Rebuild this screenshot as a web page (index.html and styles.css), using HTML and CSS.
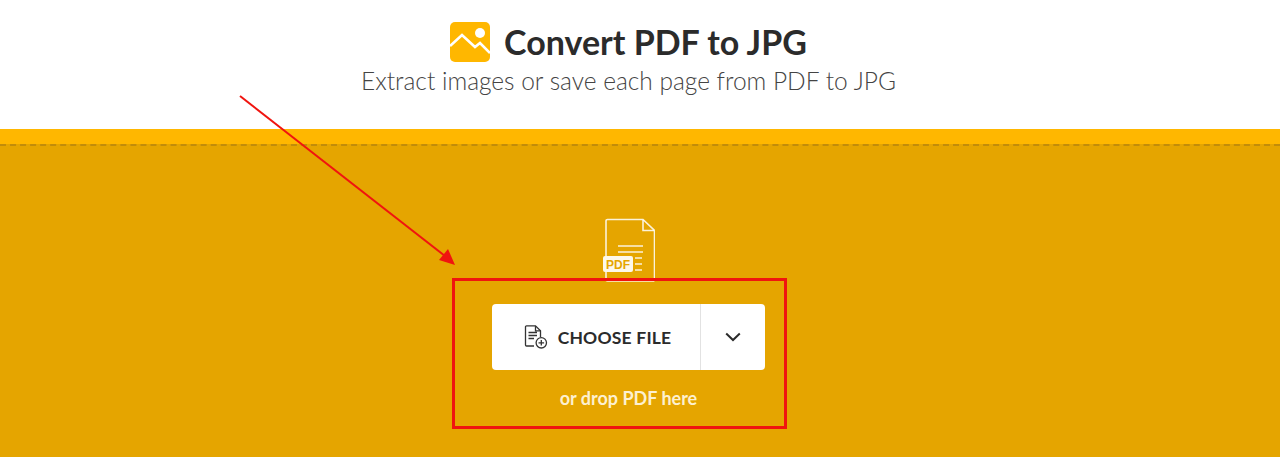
FILE: index.html
```html
<!DOCTYPE html>
<html lang="en">
<head>
  <meta charset="UTF-8">
  <title>Convert PDF to JPG</title>
  <link rel="stylesheet" href="styles.css">
</head>
<body>
  <header class="header">
    <div class="title-row">
      <svg class="title-icon" viewBox="0 0 40 40">
        <rect width="40" height="40" rx="5" fill="#FFB700"/>
        <circle cx="30" cy="11" r="5" fill="#fff"/>
        <path d="M0 24 L12 13 L25 25 L30 21 L40 31" fill="none" stroke="#fff" stroke-width="2.6"/>
      </svg>
      <h1>Convert PDF to JPG</h1>
    </div>
    <p class="subtitle">Extract images or save each page from PDF to JPG</p>
  </header>

  <main class="dropzone">
    <div class="dropzone-line"></div>
    <svg class="pdf-icon" viewBox="0 0 52 66">
      <path d="M3 38 V3 a1.500 1.500 0 0 1 1.500-1.500 H40 L51.500 12.500 V61.500 a1.500 1.500 0 0 1-1.500 1.500 H4.500 A1.500 1.500 0 0 1 3 61.500 V54" fill="none" stroke="#fff" stroke-opacity=".85" stroke-width="1.600"/>
      <path d="M40 2 V12.500 H51" fill="none" stroke="#fff" stroke-opacity=".85" stroke-width="1.600"/>
      <path d="M15 28 H40 M15 34 H40 M32 40 H39 M32 46 H39 M32 52 H39" stroke="#fff" stroke-opacity=".85" stroke-width="1.600"/>
      <rect x="0" y="38" width="30" height="16" rx="2" fill="#fff" fill-opacity=".92"/>
      <text x="15" y="50.500" class="pdf-label" text-anchor="middle">PDF</text>
    </svg>
    <div class="choose-btn">
      <div class="choose-main">
        <svg class="file-icon" viewBox="0 0 24 24">
          <path d="M10 21 H2.500 a1 1 0 0 1-1-1 V1.800 a1 1 0 0 1 1-1 H11.500 L16.500 5.800 V12" fill="none" stroke="#333" stroke-width="1.300"/>
          <path d="M11.500 1 V5.800 H16.500 M4.500 7.500 H13 M4.500 10.500 H13 M4.500 13.500 H10" fill="none" stroke="#333" stroke-width="1.300"/>
          <circle cx="17.300" cy="17.800" r="5.200" fill="none" stroke="#333" stroke-width="1.300"/>
          <path d="M17.300 15 V20.600 M14.500 17.800 H20.100" stroke="#333" stroke-width="1.300"/>
        </svg>
        <span>CHOOSE FILE</span>
      </div>
      <div class="choose-more">
        <svg class="chevron" viewBox="0 0 16 10">
          <path d="M1.200 1.500 L8 8 L14.800 1.500" fill="none" stroke="#2b2b2b" stroke-width="2"/>
        </svg>
      </div>
    </div>
    <p class="drop-hint">or drop PDF here</p>
  </main>

  <!-- red markup drawn over the screenshot -->
  <svg class="arrow" viewBox="0 0 1280 457">
    <path d="M240 96 L445 256" stroke="#f0140f" stroke-width="2" fill="none"/>
    <path d="M455 265 L439 260 L448 249 Z" fill="#f0140f"/>
  </svg>
  <div class="highlight"></div>
</body>
</html>
```

FILE: styles.css
```css
* {
  margin: 0;
  padding: 0;
  box-sizing: border-box;
}

body {
  font-family: 'Lato', 'Open Sans', sans-serif;
  background: #E5A500;
  width: 1280px;
  height: 457px;
  overflow: hidden;
  position: relative;
}

.header {
  height: 129px;
  background: #fff;
  padding: 22px 23px 0 0;
  display: flex;
  flex-direction: column;
  align-items: center;
}

.title-row {
  display: flex;
  align-items: center;
  gap: 14px;
  height: 40px;
}

.title-icon {
  width: 40px;
  height: 40px;
}

h1 {
  font-size: 34px;
  line-height: 36px;
  padding-bottom: 1px;
  font-weight: 700;
  color: #2b2b2b;
}

.subtitle {
  margin-top: 4px;
  font-size: 24.5px;
  font-weight: 300;
  color: #444;
}

.dropzone {
  height: 328px;
  background: #E5A500;
  border-top: 15px solid #FFB700;
  display: flex;
  flex-direction: column;
  align-items: center;
  padding: 74px 23px 0 0;
}

.dropzone-line {
  position: absolute;
  top: 144px;
  left: 0;
  right: 0;
  border-top: 2px dashed #c18c0a;
}

.pdf-icon {
  width: 52px;
  height: 66px;
}

.pdf-label {
  font-family: 'Liberation Sans', sans-serif;
  font-size: 12px;
  font-weight: 700;
  fill: #E5A500;
}

.choose-btn {
  display: flex;
  width: 273px;
  height: 66px;
  margin-top: 20px;
  background: #fff;
  border-radius: 4px;
}

.choose-main {
  flex: 1;
  display: flex;
  align-items: center;
  justify-content: center;
  gap: 10px;
  padding-left: 3px;
  color: #2b2b2b;
  font-size: 17.5px;
  font-weight: 700;
  letter-spacing: 0.2px;
}

.file-icon {
  width: 24px;
  height: 24px;
}

.choose-more {
  width: 65px;
  display: flex;
  align-items: center;
  justify-content: center;
  border-left: 1px solid #e2e2e2;
}

.chevron {
  width: 16px;
  height: 10px;
}

.drop-hint {
  margin-top: 17px;
  color: #fdf0d0;
  font-size: 18px;
  font-weight: 700;
}

.arrow {
  position: absolute;
  top: 0;
  left: 0;
  width: 1280px;
  height: 457px;
  pointer-events: none;
}

.highlight {
  position: absolute;
  left: 452px;
  top: 278px;
  width: 335px;
  height: 151px;
  border: 3px solid #f0140f;
}
```
